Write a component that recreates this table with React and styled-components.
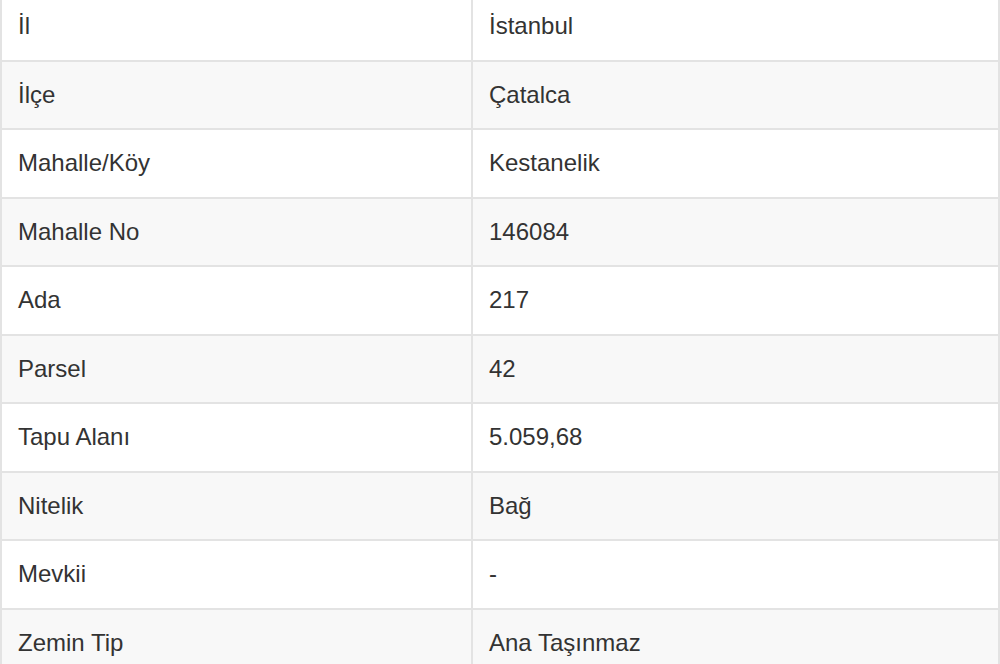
import React from "react";
import styled, { createGlobalStyle } from "styled-components";

const rows = [
  ["İl", "İstanbul"],
  ["İlçe", "Çatalca"],
  ["Mahalle/Köy", "Kestanelik"],
  ["Mahalle No", "146084"],
  ["Ada", "217"],
  ["Parsel", "42"],
  ["Tapu Alanı", "5.059,68"],
  ["Nitelik", "Bağ"],
  ["Mevkii", "-"],
  ["Zemin Tip", "Ana Taşınmaz"],
];

const GlobalStyle = createGlobalStyle`
  html, body {
    margin: 0;
    padding: 0;
    background: #ffffff;
    overflow: hidden;
  }
  body {
    font-family: "Liberation Sans", Arial, sans-serif;
  }
`;

const Table = styled.div`
  width: 996px;
  margin-top: -7px;
  border-left: 2px solid #e3e3e3;
  border-right: 2px solid #e3e3e3;
`;

const Row = styled.div`
  display: grid;
  grid-template-columns: 469px 1fr;
  background: ${(props) => (props.$striped ? "#f8f8f8" : "#ffffff")};
  border-bottom: 2px solid #e3e3e3;
`;

const Cell = styled.div`
  height: 66.5px;
  display: flex;
  align-items: center;
  padding-left: 16px;
  font-size: 24px;
  color: #333333;
  border-left: ${(props) => (props.$value ? "2px solid #e3e3e3" : "none")};
`;

const App = () => {
  return (
    <>
      <GlobalStyle />
      <Table>
        {rows.map(([label, value], i) => (
          <Row key={label} $striped={i % 2 === 1}>
            <Cell>{label}</Cell>
            <Cell $value>{value}</Cell>
          </Row>
        ))}
      </Table>
    </>
  );
};

export default App;
